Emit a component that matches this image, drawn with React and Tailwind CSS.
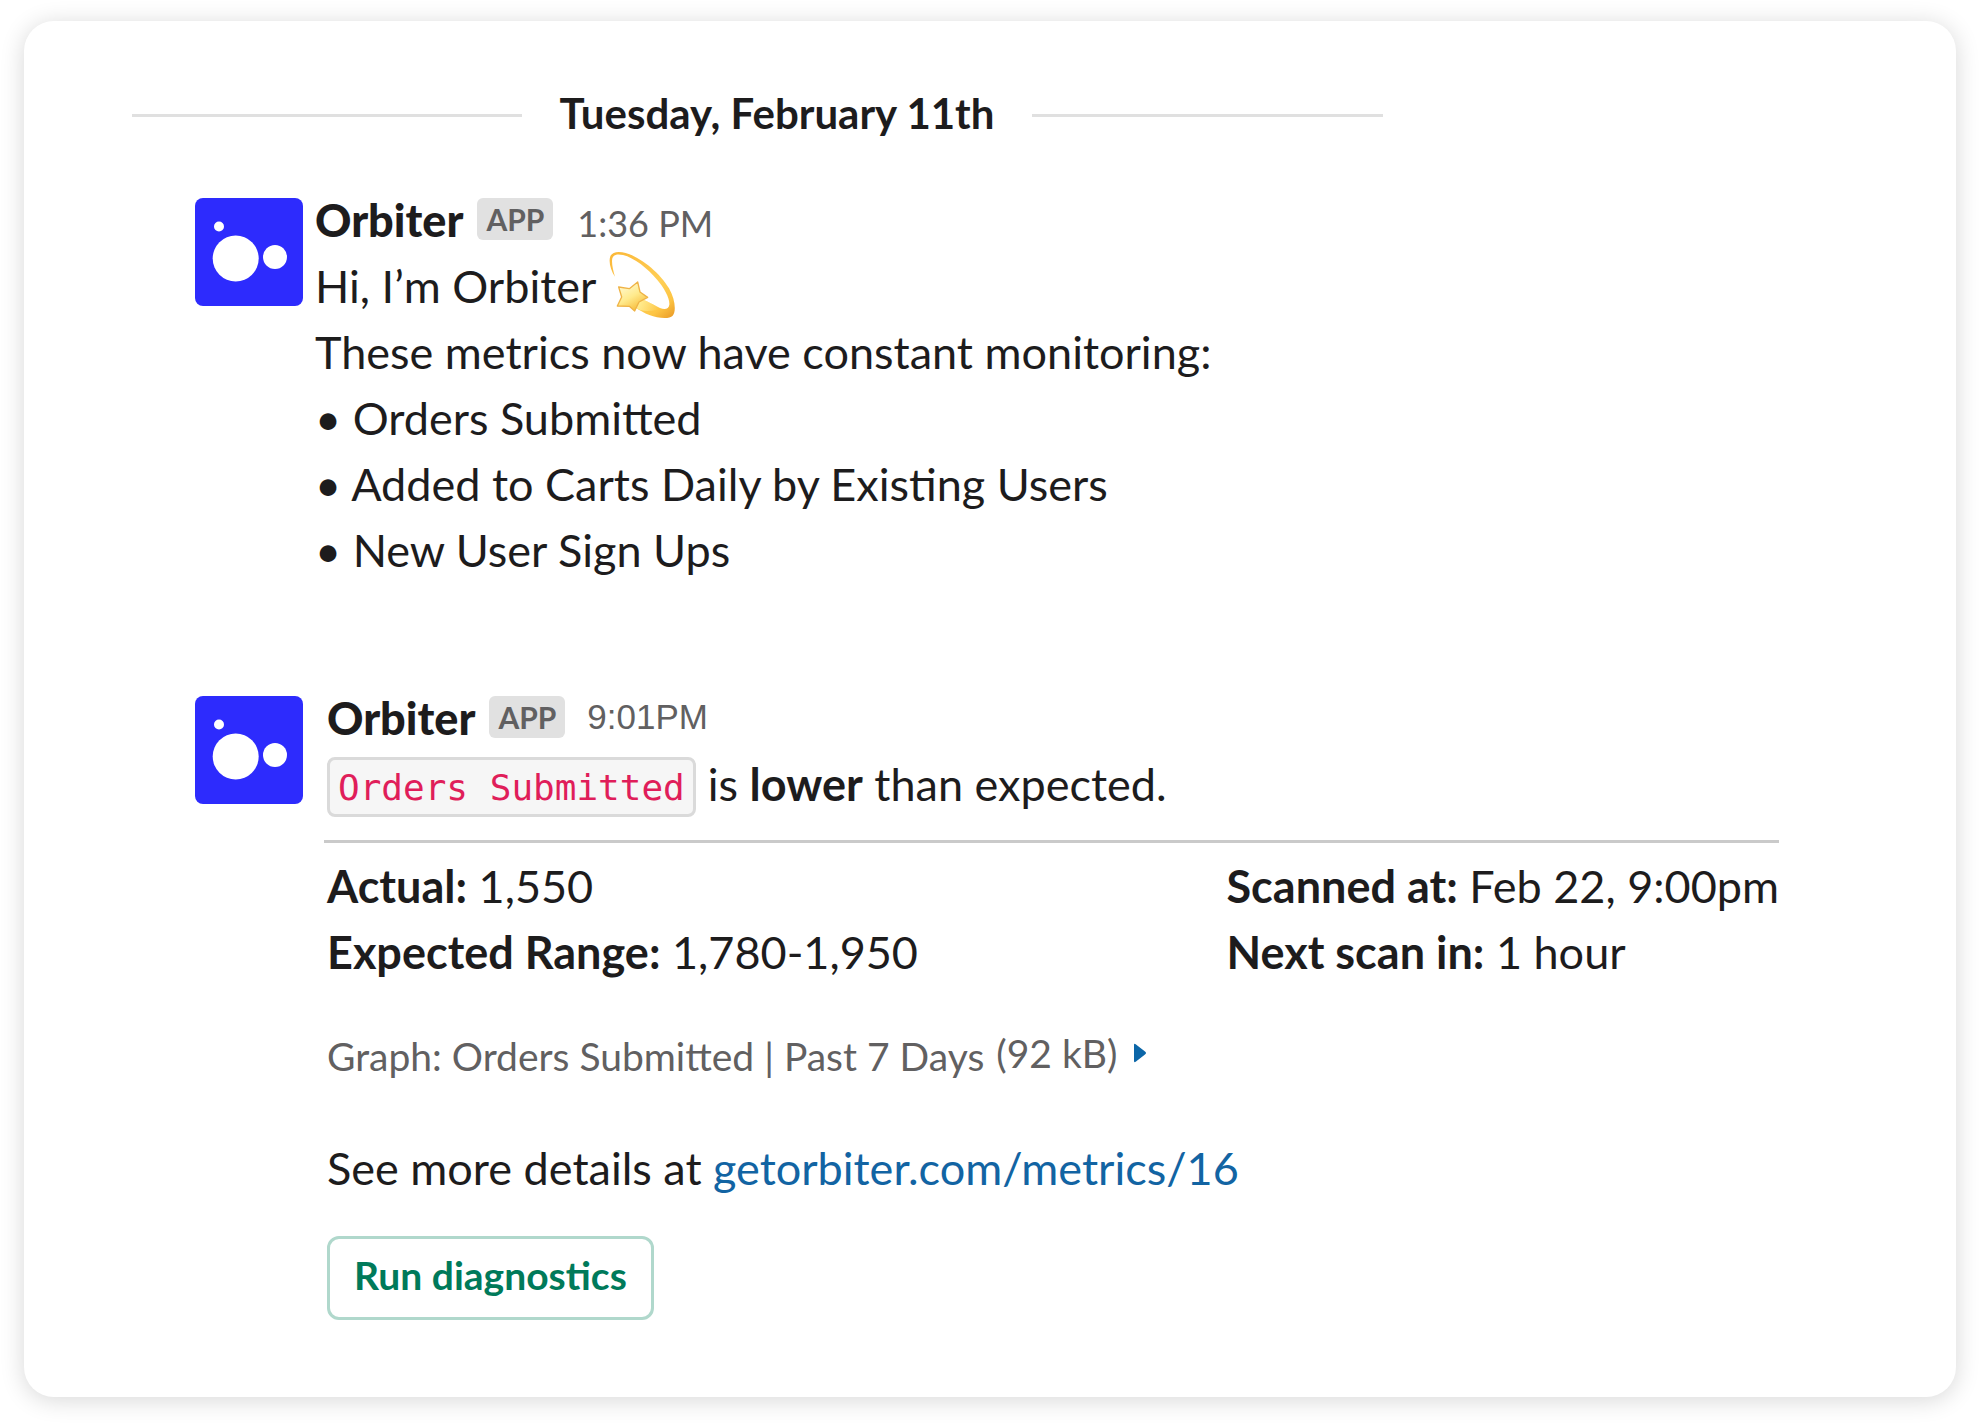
const METRICS = [
  "Orders Submitted",
  "Added to Carts Daily by Existing Users",
  "New User Sign Ups",
];

function OrbiterAvatar() {
  return (
    <svg viewBox="0 0 108 108" className="size-[108px] shrink-0" role="img" aria-label="Orbiter">
      <rect width="108" height="108" rx="8" fill="#2d2bfd" />
      <circle cx="24" cy="28.500" r="5" fill="#fff" />
      <circle cx="40.700" cy="60.500" r="23" fill="#fff" />
      <circle cx="80" cy="59" r="12" fill="#fff" />
    </svg>
  );
}

function DizzyEmoji() {
  return (
    <svg viewBox="84 35 204 204" className="size-[68px]" role="img" aria-label="dizzy">
      <defs>
        <linearGradient id="ring" x1="100" y1="40" x2="262" y2="236" gradientUnits="userSpaceOnUse">
          <stop offset="0" stopColor="#fbb93a" />
          <stop offset="0.600" stopColor="#ffcf56" />
          <stop offset="0.850" stopColor="#fdc544" />
          <stop offset="1" stopColor="#eda22c" />
        </linearGradient>
        <linearGradient id="star" x1="125" y1="135" x2="170" y2="212" gradientUnits="userSpaceOnUse">
          <stop offset="0" stopColor="#fff8cc" />
          <stop offset="0.500" stopColor="#ffea8c" />
          <stop offset="1" stopColor="#f7bb38" />
        </linearGradient>
        <linearGradient id="tail" x1="176" y1="190" x2="235" y2="212" gradientUnits="userSpaceOnUse">
          <stop offset="0" stopColor="#ffec90" />
          <stop offset="1" stopColor="#ffec90" stopOpacity="0" />
        </linearGradient>
      </defs>
      <path
        d="M105 109C92 91 85 64 91 48C97 33 118 33 137 38C183 51 240 98 267 144C286 178 289 213 278 226C268 237 234 234 208 224C193 218 178 210 168 203L178 176C207 182 219 194 240 203C255 209 266 206 268 193C270 176 253 143 232 119C203 84 162 52 129 44C111 40 100 43 97 54C94 68 99 90 105 109Z"
        fill="url(#ring)"
      />
      <path d="M168 203L178 176C207 182 219 194 240 203C236 210 212 212 200 212C188 212 178 209 168 203Z" fill="url(#tail)" />
      <path
        d="M173 125L180 155L203 171L177 185L164 212L148 198L112 197L125 170L116 140L148 145Z"
        fill="url(#star)"
        stroke="#efb346"
        strokeWidth="4"
        strokeLinejoin="round"
      />
    </svg>
  );
}

function DateDivider({ children }) {
  return (
    <div className="ml-[108px] flex max-w-[1251px] items-center gap-[38px]">
      <div className="h-[3px] grow-[390] basis-0 bg-[#e0e0e0]" />
      <h2 className="pb-[5px] text-[42px] leading-[50px] font-bold whitespace-nowrap">{children}</h2>
      <div className="h-[3px] grow-[351] basis-0 bg-[#e0e0e0]" />
    </div>
  );
}

function MessageHeader({ time, timeClass }) {
  return (
    <header className="mb-[11px] flex h-[44px] items-baseline">
      <span className="text-[45px] leading-[44px] font-black">Orbiter</span>
      <span className="ml-[14px] h-[42px] self-start rounded-md bg-[#e1e1e1] px-[9px] text-[30px] leading-[42px] font-bold text-[#616061]">
        APP
      </span>
      <time className={timeClass}>{time}</time>
    </header>
  );
}

function Field({ label, children }) {
  return (
    <div>
      <dt className="inline font-bold">{label}</dt> <dd className="inline">{children}</dd>
    </div>
  );
}

export default function App() {
  return (
    <div className="min-h-screen bg-white px-6 pt-[21px] pb-[27px] font-['Lato',sans-serif] text-[45px] leading-[66px] text-[#1d1c1d]">
      <main className="rounded-[30px] bg-white pt-[67px] pb-[77px] shadow-[0_3px_24px_rgba(0,0,0,0.16)]">
        <DateDivider>Tuesday, February 11th</DateDivider>

        <article className="mt-[55px] flex gap-3 pr-[177px] pl-[171px]">
          <OrbiterAvatar />
          <div className="min-w-0 flex-1">
            <MessageHeader time="1:36 PM" timeClass="ml-6 text-[36px] leading-[44px] text-[#616061]" />
            <p className="flex h-[66px] items-center gap-3">
              Hi, I’m Orbiter <DizzyEmoji />
            </p>
            <p>These metrics now have constant monitoring:</p>
            <ul>
              {METRICS.map((metric) => (
                <li key={metric}>• {metric}</li>
              ))}
            </ul>
          </div>
        </article>

        <article className="mt-[113px] flex gap-6 pr-[177px] pl-[171px]">
          <OrbiterAvatar />
          <div className="min-w-0 flex-1">
            <MessageHeader
              time="9:01PM"
              timeClass="ml-[22px] self-start font-['Liberation_Sans',sans-serif] text-[35px] leading-[42px] text-[#616061]"
            />
            <p className="flex items-end gap-3">
              <code className="h-[60px] rounded-lg border-3 border-[#dadada] bg-[#f6f6f6] px-2 font-['DejaVu_Sans_Mono',monospace] text-[36px] leading-[56px] text-[#e01e5a]">
                Orders Submitted
              </code>
              <span>
                is <b>lower</b> than expected.
              </span>
            </p>
            <hr className="mt-[23px] -ml-[3px] border-t-3 border-[#cacaca]" />
            <dl className="mt-[10px] flex justify-between">
              <div>
                <Field label="Actual:">1,550</Field>
                <Field label="Expected Range:">1,780-1,950</Field>
              </div>
              <div>
                <Field label="Scanned at:">Feb 22, 9:00pm</Field>
                <Field label="Next scan in:">1 hour</Field>
              </div>
            </dl>
            <div className="mt-[45px] flex items-start gap-3 text-[39px] leading-[52px] text-[#616061]">
              <span>Graph: Orders Submitted | Past 7 Days</span>
              <button type="button" className="flex items-center gap-4 leading-[46px]">
                (92 kB)
                <svg viewBox="0 0 14 20" className="h-5 w-[14px]" aria-hidden="true">
                  <path d="M1 2Q1 0 3 1.500L12 8.500Q14 10 12 11.500L3 18.500Q1 20 1 18Z" fill="#0b66a8" />
                </svg>
              </button>
            </div>
            <p className="mt-[53px]">
              See more details at{" "}
              <a href="#metrics-16" className="text-[#1264a3]">
                getorbiter.com/metrics/16
              </a>
            </p>
            <button
              type="button"
              className="mt-[35px] block h-[84px] rounded-xl border-3 border-[#b0d8cc] px-6 pb-[6px] text-[39px] leading-[48px] font-bold text-[#007a5a]"
            >
              Run diagnostics
            </button>
          </div>
        </article>
      </main>
    </div>
  );
}
